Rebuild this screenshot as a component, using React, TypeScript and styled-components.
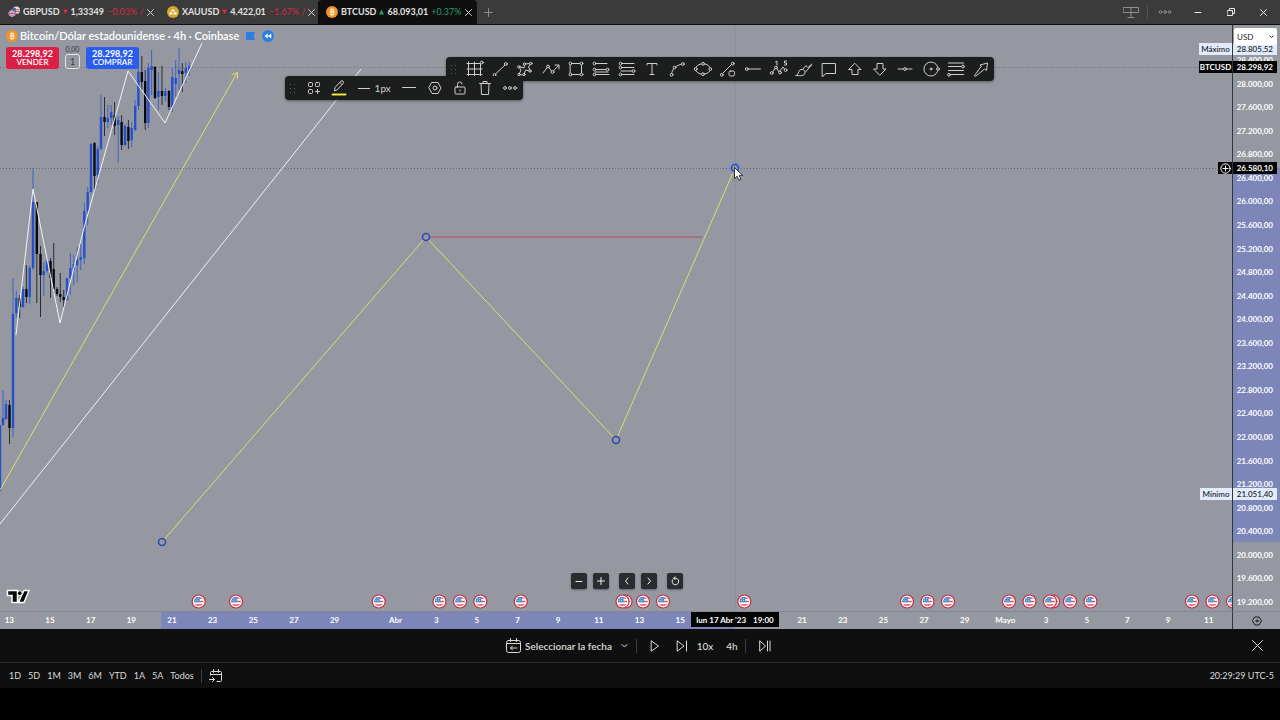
import React from "react";
import styled, { createGlobalStyle } from "styled-components";

const GlobalStyle = createGlobalStyle`
  * { box-sizing: border-box; }
  body { margin: 0; background: #000; }
  button, select { font: inherit; color: inherit; border: 0; padding: 0; background: none; cursor: pointer; }
  svg { flex: none; }
`;

const App$ = styled.div`
  display: flex;
  flex-direction: column;
  min-height: 100vh;
  padding-bottom: 32px;
  background: #000;
  color: #dbdbdb;
  font-family: "Lato", "Open Sans", sans-serif;
  font-size: 9px;
  line-height: 12px;
  overflow: hidden;
`;

/* ---------- top tabs ---------- */
const TabBar = styled.header`
  display: flex;
  height: 25px;
  background: #3b3b3b;
  border-bottom: 1px solid #0c0c0c;
`;
const Tab = styled.div<{ $active?: boolean }>`
  display: flex;
  align-items: center;
  gap: 3px;
  width: 159px;
  padding: 0 5px 0 8px;
  border-radius: 4px 4px 0 0;
  white-space: nowrap;
  background: ${(p) => (p.$active ? "#0f0f0f" : "transparent")};
`;
const Symbol$ = styled.span`
  font-weight: 700;
  color: #e2e2e2;
`;
const Triangle = styled.svg`
  width: 5px;
  height: 6px;
`;
const Change = styled.span<{ $up?: boolean }>`
  color: ${(p) => (p.$up ? "#2b9a70" : "#d12a4b")};
`;
const TabClose = styled.button`
  display: flex;
  margin-left: auto;
  color: #d0d0d0;
`;
const AddTab = styled.button`
  display: flex;
  align-items: center;
  padding: 0 7px;
  color: #8c8c8c;
`;
const WindowControls = styled.div`
  display: flex;
  align-items: center;
  margin-left: auto;
`;
const WindowButton = styled.button<{ $dim?: boolean }>`
  display: flex;
  align-items: center;
  justify-content: center;
  width: 33px;
  height: 24px;
  color: ${(p) => (p.$dim ? "#8f8f8f" : "#e8e8e8")};
`;
const Divider = styled.span<{ $tall?: boolean }>`
  width: 1px;
  height: ${(p) => (p.$tall ? 18 : 14)}px;
  background: #3d3d3d;
`;
const BarDivider = styled(Divider)`
  background: #555;
`;

/* ---------- chart ---------- */
const Chart = styled.main`
  position: relative;
  flex: 1;
  display: grid;
  grid-template-columns: minmax(0, 1fr) 48px;
  grid-template-rows: minmax(300px, 1fr) 18px;
  background: #9598a1;
  overflow: hidden;
`;
const Plot = styled.section`
  position: relative;
  overflow: hidden;
`;
const Drawing = styled.svg`
  position: absolute;
  inset: 0;
  width: 100%;
  height: 100%;
`;
const Legend = styled.div`
  position: absolute;
  top: 4px;
  left: 6px;
  display: flex;
  flex-direction: column;
  gap: 4px;
  color: #fff;
`;
const TitleRow = styled.div`
  display: flex;
  align-items: center;
  gap: 7px;
  height: 14px;
`;
const Title = styled.h1`
  display: flex;
  align-items: center;
  gap: 2px;
  margin: 0;
  font-size: 11px;
  line-height: 14px;
  font-weight: 600;
  white-space: nowrap;
`;
const TradeRow = styled.div`
  display: flex;
  gap: 6px;
`;
const TradeButton = styled.button<{ $buy?: boolean }>`
  width: 53px;
  height: 22px;
  border-radius: 3px;
  background: ${(p) => (p.$buy ? "#2b5cf0" : "#dc1f47")};
  font-size: 8px;
  line-height: 9px;
  font-weight: 600;
  color: #fff;
`;
const Price = styled.span`
  display: block;
  font-size: 9px;
  font-weight: 700;
`;
const Spread = styled.div`
  display: flex;
  flex-direction: column;
  align-items: center;
  width: 15px;
  margin: -2px 0 0;
  font-size: 7px;
  line-height: 9px;
  color: #33353c;
`;
const Quantity = styled.button`
  width: 15px;
  height: 15px;
  border: 1px solid #e4e5e8;
  border-radius: 3px;
  font-size: 9px;
  line-height: 12px;
`;
const FloatingBar = styled.div<{ $x: number; $y: number; $w: number }>`
  position: absolute;
  left: ${(p) => p.$x}px;
  top: ${(p) => p.$y}px;
  width: ${(p) => p.$w}px;
  height: 24px;
  display: flex;
  align-items: center;
  border-radius: 4px;
  background: #1c1d1d;
  box-shadow: 0 1px 3px rgba(0, 0, 0, 0.4);
  color: #cfcfcf;
`;
const Grip = styled.span`
  display: flex;
  justify-content: center;
  width: 16px;
`;
const ToolButton = styled.button<{ $grow?: number }>`
  flex: ${(p) => p.$grow ?? 1} 1 0;
  display: flex;
  align-items: center;
  justify-content: center;
  gap: 5px;
  height: 24px;
  font-size: 10px;
`;
const NavRow = styled.div`
  position: absolute;
  left: 0;
  right: 0;
  bottom: 22px;
  display: flex;
  justify-content: center;
  gap: 10px;
  padding-left: 22px;
`;
const NavPair = styled.div`
  display: flex;
  gap: 6px;
`;
const NavButton = styled.button`
  display: flex;
  align-items: center;
  justify-content: center;
  width: 16px;
  height: 16px;
  border-radius: 2px;
  background: #2b2c2f;
  box-shadow: 0 1px 2px rgba(0, 0, 0, 0.35);
  color: #f0f0f0;
`;
const Logo = styled.svg`
  position: absolute;
  left: 6px;
  bottom: 7px;
`;
const PriceAxis = styled.aside`
  display: flex;
  flex-direction: column;
  justify-content: space-between;
  position: relative;
  border-left: 1px solid #33353b;
  padding: 28px 7px 2px 0;
  text-align: right;
  font-size: 8px;
  line-height: 14px;
  font-weight: 700;
  color: #fff;
`;
const PriceRange = styled.div`
  position: absolute;
  left: 0;
  right: 0;
  top: 143px;
  height: 374px;
  background: #7c86b8;
`;
const AxisLabel = styled.span`
  position: relative;
`;
const CurrencyBox = styled.label`
  position: absolute;
  top: 3px;
  right: 3px;
  display: flex;
  align-items: center;
  width: 43px;
  height: 17px;
  padding: 0 3px;
  border-radius: 2px;
  background: #fff;
  color: #22242a;
`;
const Currency = styled.select`
  flex: 1;
  min-width: 0;
  appearance: none;
  outline: 0;
  font-size: 8px;
  line-height: 14px;
`;
const PriceTag = styled.div<{ $y: number; $dark?: boolean }>`
  position: absolute;
  top: ${(p) => p.$y}px;
  right: 3px;
  display: flex;
  gap: 1px;
  font-size: 8px;
  line-height: 12px;
  font-weight: ${(p) => (p.$dark ? 700 : 500)};
  color: ${(p) => (p.$dark ? "#fff" : "#14161c")};
  & > * { background: ${(p) => (p.$dark ? "#050505" : "#e1ebfa")}; }
`;
const TagName = styled.span<{ $w: number }>`
  display: flex;
  align-items: center;
  justify-content: center;
  width: ${(p) => p.$w}px;
  height: 12px;
`;
const TagValue = styled.span`
  width: 44px;
  height: 12px;
  padding-right: 4px;
  text-align: right;
`;
const TimeAxis = styled.div`
  position: relative;
  display: flex;
  overflow: hidden;
  border-top: 1px solid #858890;
  padding-right: 3px;
  font-size: 8px;
  line-height: 17px;
  font-weight: 700;
  color: #fff;
`;
const TimeRange = styled.div`
  position: absolute;
  left: 161px;
  width: 574px;
  top: 0;
  bottom: 0;
  background: #7c86b8;
`;
const TimeTag = styled.div`
  position: absolute;
  left: 691px;
  top: 0;
  width: 88px;
  height: 15px;
  display: flex;
  justify-content: center;
  gap: 7px;
  background: #050505;
`;
const TimeLabels = styled.div`
  position: relative;
  flex: 1;
  display: flex;
  margin-left: -11px;
`;
const TimeLabel = styled.span<{ $days: number }>`
  flex: ${(p) => p.$days} 1 0;
  min-width: 0;
  text-align: center;
`;
const AxisCorner = styled.button`
  display: flex;
  align-items: center;
  justify-content: center;
  border-left: 1px solid #33353b;
  border-top: 1px solid #858890;
  color: #1d1e22;
`;

/* ---------- bottom bars ---------- */
const ReplayBar = styled.section`
  display: grid;
  grid-template-columns: 1fr auto 1fr;
  align-items: center;
  height: 34px;
  background: #0f0f0f;
  border-bottom: 1px solid #2c2c2c;
`;
const ReplayControls = styled.div`
  grid-column: 2;
  display: flex;
  align-items: center;
  padding-left: 9px;
`;
const ReplayButton = styled.button<{ $w: number; $strong?: boolean }>`
  display: flex;
  align-items: center;
  justify-content: center;
  gap: 4px;
  width: ${(p) => p.$w}px;
  height: 24px;
  font-size: 10px;
  font-weight: ${(p) => (p.$strong ? 600 : 500)};
  white-space: nowrap;
`;
const CloseReplay = styled.button`
  grid-column: 3;
  justify-self: end;
  display: flex;
  margin-right: 17px;
`;
const RangeBar = styled.footer`
  display: flex;
  align-items: center;
  gap: 7px;
  height: 25px;
  padding: 0 6px 0 9px;
  background: #0f0f0f;
`;
const RangeButton = styled.button`
  display: flex;
`;
const Clock = styled.button`
  margin-left: auto;
`;

/* ---------- icons ---------- */
const Icon = ({ children, size = 18, box = size }: { children: React.ReactNode; size?: number; box?: number }) => (
  <svg width={size} height={size} viewBox={`0 0 ${box} ${box}`} fill="none" stroke="currentColor" strokeWidth="1" strokeLinecap="round" strokeLinejoin="round">
    {children}
  </svg>
);
const Dots = ({ at, r = 1.4 }: { at: number[][]; r?: number }) => (
  <>
    {at.map(([x, y], i) => (
      <circle key={i} cx={x} cy={y} r={r} fill="#1c1d1d" />
    ))}
  </>
);
const Cross = ({ size = 7 }: { size?: number }) => (
  <Icon size={size}><path d={`M.5.5 ${size - 0.5} ${size - 0.5}M${size - 0.5}.5.5 ${size - 0.5}`} /></Icon>
);
const GripDots = () => (
  <svg width="6" height="9" fill="#5b5b5b">
    {[0, 4, 8].map((y) => [0, 4].map((x) => <rect key={`${x}${y}`} x={x} y={y} width="1" height="1" />))}
  </svg>
);

const tools: [string, React.ReactNode][] = [
  ["Cuadrícula", <><path d="M1 3.5h13M1 9h15M1 14.5h15M2.500 2v15M8.500 2v15M14.5 4v13" /><Dots at={[[15.8, 2.5]]} /></>],
  ["Línea de tendencia", <><path d="M4 14.5 14.5 4.5" /><Dots at={[[3.5, 15], [14.8, 4]]} /></>],
  ["Patrón", <><path d="M3 14.5 5 10 2.500 6.500 8 8 8.5 4 14.8 3.500 12.500 7 14.500 11 9.500 10 8 14.5z" /><Dots r={1.2} at={[[3, 14.5], [2.800, 6.800], [8.5, 4], [14.8, 3.500], [14, 11], [8, 14.5]]} /></>],
  ["Trayectoria", <><path d="M1 13 6 6.5 10.5 12 16.5 5.5M13 5h4v4" /><Dots at={[[6, 6.5], [10.5, 12]]} /></>],
  ["Rectángulo", <><path d="M3.5 3.5h11v11h-11z" /><Dots at={[[3.5, 3.5], [14.5, 3.5], [3.5, 14.5], [14.5, 14.5]]} /></>],
  ["Posición larga", <><path d="M3 3.5h12M3 9.500h12M3 14.5h14M3 12h13" /><Dots at={[[2.5, 3.5], [2.5, 9.5], [15.5, 9.5], [2.5, 14.5]]} /></>],
  ["Posición corta", <><path d="M3 3.5h13M3 7.500h13M3 14.5h13M3 11h12" strokeDasharray="none" /><Dots at={[[2.5, 3.5], [2.5, 7.500], [15.5, 11], [2.5, 14.5]]} /></>],
  ["Texto", <path d="M4 5V3.5h10V5M9 3.5v11M7 14.5h4" />],
  ["Curva", <><path d="M3.5 14.5C4 9 8 5 14.5 4" /><Dots at={[[3.5, 14.8], [6.5, 7.5], [14.8, 4]]} /></>],
  ["Elipse", <><ellipse cx="9" cy="9" rx="7.5" ry="5.2" /><Dots at={[[1.7, 9], [16.3, 9], [9, 3.8], [9, 14.2]]} /></>],
  ["Formas", <><path d="M3 14 13 4" /><Dots at={[[2.8, 14.8], [13.8, 3.6]]} /><rect x="10" y="11" width="5.5" height="5" rx="1.5" /></>],
  ["Rayo horizontal", <><path d="M4 9h12.5" /><Dots at={[[2.8, 9]]} /></>],
  ["Ondas de Elliott", <><path d="M2 13 6 7 9 12 13 7 16 11M5.5 2 7 1v4M16.5 1h-2v2h2v2h-2" /><Dots at={[[1.8, 13], [6, 7.5], [10, 12.5], [15.5, 10]]} /></>],
  ["Pincel", <path d="M1 15.5c3 0 1.5-5 5-6 3-.5 5 2 3.5 4.5S4 15.500 1 15.500zM8 9 11 5.500M10.500 12 16.500 5M11.500 6.500c1 1.500 2.500 1 3-.5M14.500 6.500 16.800 4" />],
  ["Comentario", <path d="M2.500 3.500h13v10h-9.500l-3.500 3z" />],
  ["Flecha arriba", <path d="M9 3.500 15 9.500h-3v5H6v-5H3z" />],
  ["Flecha abajo", <path d="M9 15 15 9h-3V3.500H6V9H3z" />],
  ["Línea horizontal", <><path d="M2 9h14" /><Dots at={[[9, 9]]} /></>],
  ["Círculo", <><circle cx="9" cy="9" r="7" /><circle cx="9" cy="9" r="1" /><Dots at={[[16, 9]]} /></>],
  ["Retroceso de Fibonacci", <><path d="M1.500 3h15M1.500 6.500h15M1.500 10.500h15M3 14.500h13.500" /><Dots at={[[16, 6.500], [2, 14.800]]} /></>],
  ["Flecha", <path d="M2.500 15.500 9.500 6 8 5 15.500 3 14.500 10.500 12.500 9 4 16z" />],
];

const BtcIcon = () => (
  <svg width="12" height="12" viewBox="0 0 12 12">
    <circle cx="6" cy="6" r="6" fill="#ee9428" />
    <path d="M4.500 3.500h2.200a1.200 1.200 0 0 1 0 2.400H4.800h2.200a1.300 1.300 0 0 1 0 2.600H4.300M5 3.500v5M5.500 2.500v1M7 2.500v1M5.500 8.500v1M7 8.500v1" stroke="#fff" strokeWidth=".9" fill="none" />
  </svg>
);
const GbpIcon = () => (
  <svg width="12" height="12" viewBox="0 0 13 12">
    <circle cx="9" cy="4" r="4" fill="#dfe3ee" /><path d="M5.500 3.500h7M6 5.500h6.500" stroke="#cf3f54" /><path d="M5.500 1.500h3v3h-3z" fill="#3d66b5" />
    <circle cx="4.500" cy="7.500" r="4.500" fill="#3b3b3b" /><circle cx="4.500" cy="7.500" r="4" fill="#42579e" />
    <path d="M1.800 4.800l5.400 5.400M7.200 4.800 1.800 10.200" stroke="#fff" /><path d="M4.500 3.500v8M.5 7.500h8" stroke="#fff" strokeWidth="2" /><path d="M4.500 3.500v8M.5 7.500h8" stroke="#d8304a" />
  </svg>
);
const GoldIcon = () => (
  <svg width="12" height="12" viewBox="0 0 12 12">
    <circle cx="6" cy="6" r="6" fill="#d6a72b" />
    <path d="M5 3.500h2l.7 2H4.300zM2.700 6.300h2.200l.7 2.200H2zM7.100 6.300h2.200l.7 2.200H6.400z" fill="#fff" />
  </svg>
);

/* ---------- chart data ---------- */
const TOP = 25;
// x, high, body top, body bottom, low, rising
const candles: [number, number, number, number, number, number][] = [
  [0, 425, 425, 491, 491, 1], [3, 390, 418, 425, 426, 1], [6, 400, 404, 419, 420, 1], [9.500, 400, 405, 428, 444, 0],
  [13, 278, 314, 428, 437, 1], [16.300, 291, 298, 313, 318, 1], [19.700, 295, 298, 307, 318, 0], [23, 287, 289, 307, 308, 1],
  [26.400, 265, 289, 297, 303, 0], [29.700, 266, 268, 297, 304, 1], [33, 168, 202, 268, 270, 1], [36.800, 202, 202, 254, 303, 0],
  [40.500, 246, 254, 275, 317, 0], [43.800, 262, 271, 275, 296, 1], [47, 259, 261, 271, 273, 1], [50.500, 258, 261, 278, 298, 0],
  [53.700, 243, 269, 289, 293, 0], [57, 287, 289, 294, 296, 0], [60.300, 273, 294, 297, 302, 0], [63.700, 290, 297, 300, 307, 0],
  [67, 278, 278, 300, 301, 1], [70.400, 253, 268, 278, 295, 1], [73.800, 255, 264, 270, 285, 1], [77.200, 247, 260, 265, 282, 1],
  [80.700, 243, 257, 260, 270, 1], [84.300, 203, 211, 258, 264, 1], [87.700, 187, 192, 211, 225, 1], [91, 143, 144, 192, 193, 1],
  [94.500, 142, 143, 176, 192, 0], [97.800, 146, 149, 175, 183, 1], [101, 95, 117, 149, 150, 1], [104.500, 97, 117, 122, 136, 0],
  [107.800, 105, 118, 122, 128, 1], [111.200, 105, 112, 118, 125, 1], [114.600, 102, 115, 126, 135, 0], [118.200, 116, 120, 125, 163, 1],
  [121.600, 115, 122, 145, 150, 0], [125, 124, 126, 145, 146, 1], [128.400, 120, 127, 141, 149, 0], [131.700, 122, 128, 140, 147, 1],
  [135.200, 100, 106, 130, 131, 1], [138.400, 48, 72, 106, 110, 1], [141.800, 56, 72, 82, 90, 0], [145.200, 70, 81, 123, 130, 0],
  [148.400, 63, 68, 123, 128, 1], [151.600, 50, 66, 70, 95, 1], [155, 66, 67, 98, 99, 0], [158.400, 72, 91, 97, 110, 1],
  [162, 66, 91, 96, 105, 0], [165.400, 88, 91, 96, 101, 1], [169, 90, 91, 107, 110, 0], [172.300, 68, 77, 107, 112, 1],
  [175.700, 60, 78, 84, 97, 1], [179, 48, 70, 74, 90, 1], [182.300, 63, 71, 74, 92, 0], [185.800, 62, 68, 73, 83, 1], [189.300, 62, 66, 70, 76, 1],
];
const events = [198.700, 236, 378.700, 439.500, 460, 480.300, 520.800, 625.500, 622.500, 643, 663, 744.300, 907, 927.500, 948, 1009, 1029.500, 1053, 1050, 1070, 1090.500, 1192, 1212.500, 1233];
const anchors = [[162, 542], [426, 237], [616, 440], [735, 168]];
const prices = Array.from({ length: 24 }, (_, i) => {
  const v = 28400 - i * 400;
  return `${Math.floor(v / 1000)}.${String(v % 1000).padStart(3, "0")},00`;
});
// label and the number of days its slot spans
const label = (text: string): [string, number] => [text, 2];
const days: [string, number][] = [
  ...["13", "15", "17", "19", "21", "23", "25", "27", "29"].map(label),
  ["", 1],
  ...["Abr", "3", "5", "7", "9", "11", "13", "15"].map(label),
  ["", 4],
  ...["21", "23", "25", "27", "29", "Mayo", "3", "5", "7", "9", "11"].map(label),
];
const ranges = ["1D", "5D", "1M", "3M", "6M", "YTD", "1A", "5A", "Todos"];

const QuoteTab = ({ icon, name, value, change, up, active }: { icon: React.ReactNode; name: string; value: string; change: string; up?: boolean; active?: boolean }) => (
  <Tab $active={active}>
    {icon}
    <Symbol$>{name}</Symbol$>
    <Triangle viewBox="0 0 6 6"><path d={up ? "M3 0 6 6H0z" : "M0 0h6L3 6z"} fill={up ? "#2b9a70" : "#d12a4b"} /></Triangle>
    <Symbol$>{value}</Symbol$>
    <Change $up={up}>{change}</Change>
    <TabClose aria-label={`Cerrar ${name}`}><Cross /></TabClose>
  </Tab>
);

const ChartDrawing = () => (
  <Drawing>
    <defs>
      <clipPath id="disc"><circle r="4.800" /></clipPath>
      <g id="flag">
        <circle r="6.500" fill="#fff" stroke="#c9283f" strokeWidth="1.200" />
        <g clipPath="url(#disc)">
          <path d="M-5-3.500H5M-5 0H5M-5 3.500H5" stroke="#d95468" strokeWidth="1.500" />
          <path d="M-5-5H1V.8H-5z" fill="#4a90cf" />
          <path d="M-3.500-2.800h4M-3.500-.8h4" stroke="#d5e6f5" strokeWidth=".7" strokeDasharray="1 1" />
        </g>
      </g>
    </defs>
    <g transform={`translate(0 ${-TOP})`} fill="none">
      <path d="M0 67.500H4000" stroke="#70737b" strokeDasharray="1 2" />
      <path d="M0 168.500H4000" stroke="#62656d" strokeDasharray="1 2" />
      <path d="M735.500 0V4000" stroke="#888b94" strokeDasharray="1 1" />
      {candles.map(([x, h, t, b, l, up]) => (
        <g key={x} fill={up ? "#2350cf" : "#08090c"}>
          <rect x={x - 0.500} y={h} width="1" height={l - h} opacity=".75" />
          <rect x={x - 1.200} y={t} width="2.400" height={b - t} />
        </g>
      ))}
      <path d="M16 335 33 189 60 323 84 228 128 71 165 123 202 43" stroke="#f4f4f6" />
      <path d="M0 524 361 69" stroke="#f0f0f2" />
      <path d="M0 490 237 73M231.500 75 237.500 72.500 237.500 79" stroke="#dede68" />
      <path d="M426 237H702" stroke="#b8446c" />
      <path d="M162 542 426 237 616 440 735 168" stroke="#dede68" />
      {anchors.map(([x, y]) => <circle key={x} cx={x} cy={y} r="3.500" stroke="#2b48b8" strokeWidth="1.500" fill="#9598a1" />)}
      <circle cx="735" cy="168" r="5.500" stroke="#6f8fdc" strokeWidth="2" opacity=".6" />
      {events.map((x) => <use key={x} href="#flag" x={x} y="601.500" />)}
      <path d="M734.500 167.500v11l2.600-2.300 1.800 4 2-.9-1.800-3.900h3.500z" fill="#fff" stroke="#111" strokeWidth=".8" />
    </g>
  </Drawing>
);

export default function App() {
  return (
    <App$>
      <GlobalStyle />
      <TabBar>
        <QuoteTab icon={<GbpIcon />} name="GBPUSD" value="1,33349" change="−0.03% /" />
        <QuoteTab icon={<GoldIcon />} name="XAUUSD" value="4.422,01" change="−1.67% /" />
        <QuoteTab icon={<BtcIcon />} name="BTCUSD" value="68.093,01" change="+0.37%" up active />
        <AddTab aria-label="Nueva pestaña"><Icon size={9}><path d="M4.500.5v8M.5 4.500h8" /></Icon></AddTab>
        <WindowControls>
          <WindowButton $dim aria-label="Diseño"><Icon size={16}><path d="M.5 3.500h15v5H.5zM8 3.500v10M5 13.500h6" /></Icon></WindowButton>
          <BarDivider />
          <WindowButton $dim aria-label="Más"><Icon size={14}><circle cx="2.500" cy="7" r="1.300" /><circle cx="7" cy="7" r="1.300" /><circle cx="11.500" cy="7" r="1.300" /></Icon></WindowButton>
          <WindowButton aria-label="Minimizar"><Icon size={8}><path d="M1 4.500h6" /></Icon></WindowButton>
          <WindowButton aria-label="Restaurar"><Icon size={8}><path d="M.5 2.500h5v5h-5zM2.500 2V.5h5v5H6" /></Icon></WindowButton>
          <WindowButton aria-label="Cerrar"><Cross /></WindowButton>
        </WindowControls>
      </TabBar>

      <Chart>
        <Plot>
          <ChartDrawing />
          <Legend>
            <TitleRow>
              <Title><BtcIcon />Bitcoin/Dólar estadounidense · 4h · Coinbase</Title>
              <svg width="9" height="8"><path d="M0 0h9L7.500 4 9 8H0z" fill="#2a7de1" /></svg>
              <svg width="12" height="12"><circle cx="6" cy="6" r="6" fill="#2a7de1" /><path d="M5.800 3.500v5L2.500 6zM9.300 3.500v5L6 6z" fill="#fff" /></svg>
            </TitleRow>
            <TradeRow>
              <TradeButton><Price>28.298,92</Price>VENDER</TradeButton>
              <Spread>0,00<Quantity>1</Quantity></Spread>
              <TradeButton $buy><Price>28.298,92</Price>COMPRAR</TradeButton>
            </TradeRow>
          </Legend>

          <FloatingBar $x={446} $y={32} $w={548}>
            <Grip><GripDots /></Grip>
            {tools.map(([name, art]) => <ToolButton key={name} aria-label={name}><Icon>{art}</Icon></ToolButton>)}
          </FloatingBar>
          <FloatingBar $x={285} $y={51} $w={238}>
            <Grip><GripDots /></Grip>
            <ToolButton aria-label="Plantillas"><Icon size={12}><rect x=".5" y=".5" width="4" height="4" rx="1" /><rect x="7.500" y=".5" width="4" height="4" rx="1" /><rect x=".5" y="7.500" width="4" height="4" rx="1" /><path d="M9.500 7.500v4M7.500 9.500h4" /></Icon></ToolButton>
            <ToolButton aria-label="Color"><Icon><path d="M4.500 11.500 5 8.500 11 2q1-.8 2 .2t.2 2L7.200 10.800zM10 3.500l2 2" /><path d="M2.500 15.500h13" stroke="#f2e640" strokeWidth="2" /></Icon></ToolButton>
            <ToolButton $grow={1.800} aria-label="Grosor"><Icon size={12}><path d="M0 6.500h12" /></Icon>1px</ToolButton>
            <ToolButton aria-label="Estilo de línea"><Icon size={14}><path d="M.5 6.500h13" /></Icon></ToolButton>
            <ToolButton aria-label="Ajustes"><Icon size={14}><path d="M4 1.500h6L13 7l-3 5.500H4L1 7z" /><circle cx="7" cy="7" r="2" /></Icon></ToolButton>
            <ToolButton aria-label="Bloquear"><Icon size={14}><rect x="2" y="6" width="10" height="7" rx="1" /><path d="M4.500 6V3.500a2.300 2.300 0 0 1 4.600-.5M7 9v1" /></Icon></ToolButton>
            <ToolButton aria-label="Eliminar"><Icon size={14}><path d="M1.500 2.500h11M5 2.500v-2h4v2M3 2.500l.5 11h7l.5-11" /></Icon></ToolButton>
            <ToolButton aria-label="Más opciones"><Icon size={14}><circle cx="2" cy="7" r="1.400" /><circle cx="7" cy="7" r="1.400" /><circle cx="12" cy="7" r="1.400" /></Icon></ToolButton>
          </FloatingBar>

          <NavRow>
            <NavPair>
              <NavButton aria-label="Alejar"><Icon size={8}><path d="M1 4.500h6" /></Icon></NavButton>
              <NavButton aria-label="Acercar"><Icon size={8}><path d="M.5 4h7M4 .5v7" /></Icon></NavButton>
            </NavPair>
            <NavPair>
              <NavButton aria-label="Izquierda"><Icon size={8}><path d="M5 1 2.500 4 5 7" /></Icon></NavButton>
              <NavButton aria-label="Derecha"><Icon size={8}><path d="M3 1l2.500 3L3 7" /></Icon></NavButton>
            </NavPair>
            <NavButton aria-label="Restablecer"><Icon size={10}><path d="M2.500 3.800a3.300 3.300 0 1 0 3.500-1.600H3.800M5 .8 3.600 2.200 5 3.600" /></Icon></NavButton>
          </NavRow>
          <Logo width="24" height="15" viewBox="0 0 24 15">
            <path d="M1.500 1.500h10v12H6v-7H1.500zM18 1.500h5L18 13.500h-5.500L15 7.500z" fill="#08090b" stroke="#fff" strokeWidth="1.500" />
            <circle cx="13.800" cy="4.200" r="2.400" fill="#08090b" stroke="#fff" />
          </Logo>
        </Plot>

        <PriceAxis>
          <PriceRange />
          {prices.map((p) => <AxisLabel key={p}>{p}</AxisLabel>)}
        </PriceAxis>

        <TimeAxis>
          <TimeRange />
          <TimeLabels>
            {days.map(([text, span], i) => <TimeLabel key={i} $days={span}>{text}</TimeLabel>)}
          </TimeLabels>
          <TimeTag><span>lun 17 Abr '23</span><span>19:00</span></TimeTag>
        </TimeAxis>
        <AxisCorner aria-label="Ajustes de escala"><Icon size={10}><path d="M3 1h4l2.500 4L7 9H3L.5 5z" /><circle cx="5" cy="5" r="1" /></Icon></AxisCorner>

        <PriceTag $y={18}><TagName $w={33}>Máximo</TagName><TagValue>28.805,52</TagValue></PriceTag>
        <PriceTag $y={36} $dark><TagName $w={33}>BTCUSD</TagName><TagValue>28.298,92</TagValue></PriceTag>
        <PriceTag $y={137} $dark>
          <TagName $w={14}><Icon size={11}><circle cx="5.500" cy="5.500" r="4.700" /><path d="M5.500 3v5M3 5.500h5" /></Icon></TagName>
          <TagValue>26.580,10</TagValue>
        </PriceTag>
        <PriceTag $y={463}><TagName $w={32}>Mínimo</TagName><TagValue>21.051,40</TagValue></PriceTag>
        <CurrencyBox>
          <Currency aria-label="Moneda" defaultValue="USD"><option>USD</option></Currency>
          <Icon size={5}><path d="M1 2l1.500 1.500L4 2" /></Icon>
        </CurrencyBox>
      </Chart>

      <ReplayBar>
        <ReplayControls>
          <ReplayButton $w={108} $strong><Icon size={15}><rect x=".5" y="2.500" width="14" height="12" rx="2" /><path d="M.5 5.500h14M4.500.5v3M10.500.5v3M11 10H4.500M6.500 8l-2 2 2 2" /></Icon>Seleccionar la fecha</ReplayButton>
          <ReplayButton $w={23} aria-label="Abrir menú de fecha"><Icon size={7}><path d="M1 2.500 3.500 5 6 2.500" /></Icon></ReplayButton>
          <Divider />
          <ReplayButton $w={36} aria-label="Reproducir"><Icon size={12}><path d="M2.500 1 9.500 6l-7 5z" /></Icon></ReplayButton>
          <ReplayButton $w={18} aria-label="Avanzar"><Icon size={12}><path d="M1.500 1 8 6l-6.500 5zM10.500 1v10" /></Icon></ReplayButton>
          <ReplayButton $w={28}>10x</ReplayButton>
          <ReplayButton $w={26}>4h</ReplayButton>
          <Divider />
          <ReplayButton $w={38} aria-label="Ir al tiempo real"><Icon size={12}><path d="M1 1l5.500 5L1 11zM8.500 1v10M11 1v10" /></Icon></ReplayButton>
        </ReplayControls>
        <CloseReplay aria-label="Cerrar reproducción"><Cross size={11} /></CloseReplay>
      </ReplayBar>

      <RangeBar>
        {ranges.map((r) => <RangeButton key={r}>{r}</RangeButton>)}
        <Divider />
        <RangeButton aria-label="Ir a la fecha"><Icon size={14}><path d="M1.500 6V3.500q0-1 1-1h9q1 0 1 1v8q0 1-1 1H8M1.500 5.500h11M4.500.5v3M9.500.5v3M.5 10.500h5M3.500 8.500l2 2-2 2" /></Icon></RangeButton>
        <Clock>20:29:29 UTC-5</Clock>
      </RangeBar>
    </App$>
  );
}
